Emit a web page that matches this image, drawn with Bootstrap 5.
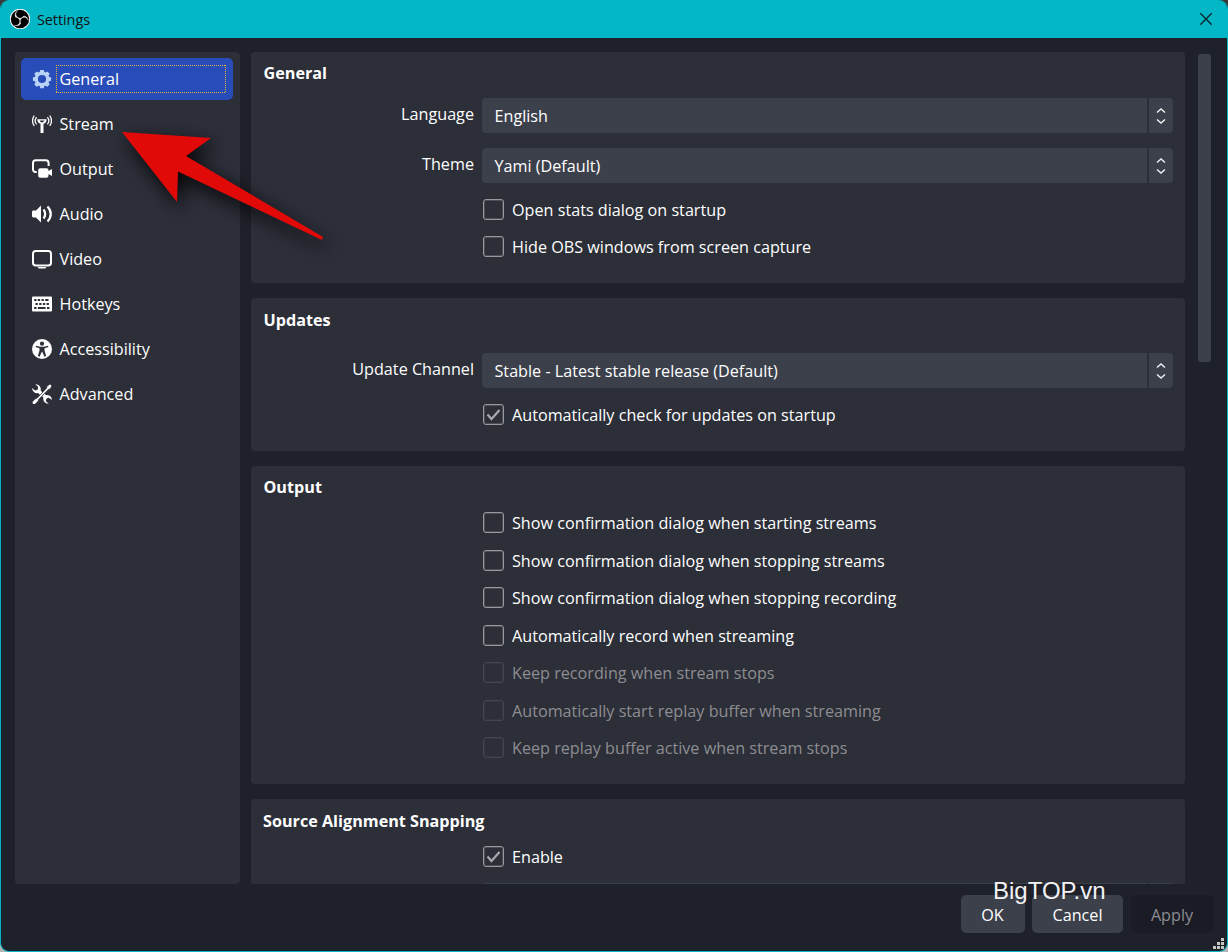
<!DOCTYPE html>
<html lang="en" data-bs-theme="dark">
<head>
<meta charset="utf-8">
<meta name="viewport" content="width=device-width, initial-scale=1">
<title>Settings</title>
<link href="https://cdn.jsdelivr.net/npm/bootstrap@5.3.0/dist/css/bootstrap.min.css" rel="stylesheet">
<style>
html, body { height: 100%; }
body { margin: 0; background: linear-gradient(#3a3a3a 50%, #b4b4b4 50%); font-family: "Open Sans", "Noto Sans", sans-serif; font-size: 16.18px; line-height: 22px; color: #fefefe; overflow: hidden; }
.win { height: 952px; background: #1f212a; border: 1px solid #03b7c7; border-width: 0 1px 1px; border-radius: 9px; overflow: hidden; }
.titlebar { height: 38px; background: #03b7c7; color: #111; font-size: 14.4px; padding: 0 14px 0 9px; flex: none; }
.titlebar .caption { margin-left: 7px; margin-top: 1px; letter-spacing: -.05px; }
.main-area { height: 846px; padding: 14px 16px 0 14px; flex: none; }
.side { width: 225px; background: #2c2e38; border-radius: 4px; padding: 6px; gap: 3px; height: 832px; flex: none; }
.side .nav-link { height: 42px; width: 212px; padding: 0 7px 0 11px; color: #fefefe; border-radius: 5px; gap: 4px; }
.side .nav-link svg { flex: none; fill: #fefefe; }
.side .nav-link span { flex: 1; height: 28px; padding: 3px 0 0 3.5px; }
.side .nav-link.active { background: #284cb8; color: #fefefe; }
.side .nav-link.active svg { fill: #b9d3f7; }
.side .nav-link.active span {
  --dot-x: repeating-linear-gradient(90deg, #e3b735 0 1px, transparent 1px 2px);
  --dot-y: repeating-linear-gradient(180deg, #e3b735 0 1px, transparent 1px 2px);
  background: var(--dot-x) top / 100% 1px no-repeat, var(--dot-x) bottom / 100% 1px no-repeat, var(--dot-y) left / 1px 100% no-repeat, var(--dot-y) right / 1px 100% no-repeat;
}
.pages { width: 934px; height: 832px; margin-left: 11px; gap: 15px; overflow: hidden; flex: none; }
.group { background: #2c2e38; border: 0; border-radius: 4px; flex: none; }
.group-title { font-size: 16.18px; font-weight: 700; line-height: 22px; margin: 0; padding: 10px 0 0 12.5px; }
.g-general { height: 231px; } .g-updates { height: 153px; } .g-output { height: 318px; } .g-snap { height: 150px; }
.g-general .fields { margin-top: 14px; }
.g-updates .group-title { padding-top: 11px; } .g-updates .fields { margin-top: 22px; }
.g-output .fields { margin-top: 6.25px; }
.g-snap .group-title { padding-top: 11px; padding-left: 12px; } .g-snap .fields { margin-top: 6px; }
.field { display: grid; grid-template-columns: 223px 692px; column-gap: 8px; height: 35px; }
.field + .field { margin-top: 15px; }
.field label { text-align: right; padding-top: 5px; }
.combo { gap: 2px; }
.combo .value { width: 665px; height: 35px; background: #3c404b; border-radius: 4px 0 0 4px; padding: 7px 12.5px 0; }
.combo .arrows { width: 24px; height: 35px; background: #3c404b; border-radius: 0 4px 4px 0; }
.field + .checks { margin-top: 8px; }
.checks + .field { margin-top: 7.25px; }
.checks { padding-left: 232px; }
.tick { height: 37.5px; gap: 8px; }
.tick i { width: 21px; height: 21px; margin-top: -1px; border: 1px solid #98999d; box-shadow: inset 0 0 0 1px rgba(152,153,157,.3); border-radius: 3px; flex: none; display: flex; }
.tick.off { color: #8c8d91; }
.tick.off i { border-color: #44464f; box-shadow: inset 0 0 0 1px rgba(68,70,79,.3); }
.bar { width: 13px; height: 308px; margin: 2px 0 0 13px; background: #3c404b; border-radius: 3px; flex: none; }
.foot { padding: 11px 13.5px 0 0; gap: 7.5px; }
.foot .btn { height: 38px; padding: 1px 0 0; border: 0; border-radius: 5px; background: #3c404b; color: #fefefe; font-size: 16.18px; line-height: 22px; }
.foot .b-ok { width: 64px; } .foot .b-cancel { width: 91px; }
.foot .b-apply { width: 83px; background: #1a1b25; color: #8c8d91; opacity: 1; }
.over { pointer-events: none; }
.arrow { left: 90px; top: 100px; filter: drop-shadow(4px 7px 9px rgba(0,0,0,.85)); }
.watermark { left: 993px; top: 878px; font: 24px/26px "Liberation Sans", Arial, sans-serif; color: #f2f2f4; }
.grip { right: 3px; bottom: 2px; }
</style>
</head>
<body>
<div class="win d-flex flex-column position-relative">
  <header class="titlebar d-flex align-items-center">
    <svg width="20" height="20" viewBox="0 0 24 24"><circle cx="12" cy="12" r="11.7" fill="#000" stroke="#f4f4f4" stroke-width="1.3"/><path fill="#f4f4f4" stroke="#f4f4f4" stroke-width=".4" d="M6.182,5.99c0.352-1.698,1.503-3.229,3.05-3.996c-0.269,0.273-0.595,0.483-0.844,0.78c-1.02,1.1-1.48,2.692-1.199,4.156c0.355,2.235,2.455,4.06,4.732,4.028c1.765,0.079,3.485-0.937,4.348-2.468c1.848,0.063,3.645,1.017,4.7,2.548c0.54,0.799,0.962,1.736,0.991,2.711c-0.342-1.295-1.202-2.446-2.375-3.095c-1.135-0.639-2.529-0.802-3.772-0.425c-1.56,0.448-2.849,1.723-3.293,3.293c-0.377,1.25-0.216,2.628,0.377,3.772c-0.825,1.429-2.315,2.449-3.932,2.756c-1.244,0.261-2.551,0.059-3.709-0.464c1.036,0.302,2.161,0.355,3.191-0.011c1.381-0.457,2.522-1.567,3.024-2.935c0.556-1.49,0.345-3.261-0.591-4.54c-0.7-1.007-1.803-1.717-3.002-1.969c-0.38-0.068-0.764-0.098-1.148-0.134c-0.611-1.231-0.834-2.66-0.528-3.996z"/></svg>
    <span class="caption">Settings</span>
    <svg class="ms-auto" width="14" height="14" viewBox="0 0 14 14"><path d="M1.3 1.3 12.7 12.7M12.7 1.3 1.3 12.7" stroke="#0b2226" stroke-width="1.3"/></svg>
  </header>

  <main class="main-area d-flex align-items-start">
    <nav class="side nav flex-column flex-nowrap">
      <a class="nav-link active d-flex align-items-center">
        <svg width="20" height="20" viewBox="0 0 20 20"><path fill-rule="evenodd" d="M8.2 1h3.6l.5 2.1 1.1.4 1.9-1.1 2.4 2.4-1.1 1.9.5 1.2 2 .4v3.5l-2 .5-.5 1.2 1.1 1.9-2.4 2.4-1.9-1.1-1.1.4-.5 2.1H8.2l-.5-2.1-1.1-.4-1.9 1.1-2.4-2.4 1.1-1.9-.5-1.2-2-.5V8.3l2-.4.5-1.2-1.1-1.9 2.4-2.4 1.9 1.1 1.1-.4zM10 5.900a4.100 4.100 0 1 0 0 8.200a4.100 4.100 0 0 0 0-8.200z"/></svg>
        <span>General</span></a>
      <a class="nav-link d-flex align-items-center">
        <svg width="20" height="20" viewBox="0 0 20 20"><path d="M5.300 5.200h9.400c0 2.400-1.300 4-3.200 4.600V19h-3V9.800C6.600 9.200 5.300 7.600 5.300 5.200zM7.500 6.600c.6 1.200 1.400 1.800 2.500 1.800s1.900-.6 2.500-1.800z" fill-rule="evenodd"/><g fill="none" stroke="#fefefe" stroke-width="1.300" stroke-linecap="round"><path d="M4.300 3.600c-1.500 2-1.500 4.300 0 6.300M15.700 3.600c1.500 2 1.500 4.300 0 6.300M2 2c-1.900 3-1.900 6.500 0 9.500M18 2c1.900 3 1.900 6.500 0 9.500"/></g></svg>
        <span>Stream</span></a>
      <a class="nav-link d-flex align-items-center">
        <svg width="20" height="20" viewBox="0 0 20 20"><path d="M4.800 12.900H3.400A2.400 2.400 0 0 1 1 10.500V4.100a2.800 2.800 0 0 1 2.800-2.800h10a2.800 2.800 0 0 1 2.800 2.800V7" fill="none" stroke="#fefefe" stroke-width="2"/><path d="M8.200 9.200h6.300a2 2 0 0 1 2 2v.9l3.500-2v7l-3.500-2v1.700a2 2 0 0 1-2 2H8.200a2 2 0 0 1-2-2v-5.600a2 2 0 0 1 2-2z"/></svg>
        <span>Output</span></a>
      <a class="nav-link d-flex align-items-center">
        <svg width="20" height="20" viewBox="0 0 20 20"><path d="M9 1.500v17L4 13.400H1.300A1.300 1.300 0 0 1 0 12.100V7.900a1.300 1.300 0 0 1 1.300-1.300H4z"/><path d="M11.500 5.500c2.200 2.500 2.200 6.500 0 9M15.500 2.500c4.300 4.500 4.300 10.500 0 15" fill="none" stroke="#fefefe" stroke-width="2.300"/></svg>
        <span>Audio</span></a>
      <a class="nav-link d-flex align-items-center">
        <svg width="20" height="20" viewBox="0 0 20 20"><rect x="1" y="2" width="18" height="14.500" rx="2.800" fill="none" stroke="#fefefe" stroke-width="2"/><path d="M5.500 18h9l-1.300 1.500H6.800z"/></svg>
        <span>Video</span></a>
      <a class="nav-link d-flex align-items-center">
        <svg width="20" height="20" viewBox="0 0 20 20"><rect y="2.500" width="20" height="15" rx="1"/><path stroke="#2c2e38" stroke-width="2" fill="none" d="M2.200 6h2.300M5.800 6h2.300M9.500 6h2.300M13.200 6h3.300M3.500 10h2.300M7.200 10h2.300M10.900 10h2.300M14.600 10h2.300M2.200 14h2.300M5.900 14h7.700M15 14h2.500"/></svg>
        <span>Hotkeys</span></a>
      <a class="nav-link d-flex align-items-center">
        <svg width="20" height="20" viewBox="0 0 20 20"><circle cx="10" cy="10" r="10"/><g fill="#2c2e38"><circle cx="10" cy="4.700" r="2.100"/><path d="M4 6.700l4 1h4l4-1 .3 1.300-3.800 1.300v2.200l1.600 5.600-1.600.6-2.300-4.900h-.4l-2.300 4.900-1.600-.6 1.600-5.600V9.300L3.700 8z"/></g></svg>
        <span>Accessibility</span></a>
      <a class="nav-link d-flex align-items-center">
        <svg width="20" height="20" viewBox="0 0 20 20"><path d="M3.300.3a5 5 0 0 1 5.300 6.300l2 2-2.500 2.500-2-2A5 5 0 0 1 .1 4l3 2.600 2.500-.9.600-2.600zM16.700 19.800a5 5 0 0 1-5.300-6.300l-1.300-1.300 2.500-2.500 1.300 1.300a5 5 0 0 1 6 5l-3-2.300-2.400.9-.7 2.500z"/><path d="M18.100 0 20 1.900l-2.200 3.300-1.500.2-10 10.500.1 1-2.900 2.900a1.600 1.600 0 0 1-2.900-.2c-.5-.9-.3-1.700.2-2.300L4 14.200l1 .1L14.700 4l.2-1.700z" stroke="#2c2e38" stroke-width=".7"/></svg>
        <span>Advanced</span></a>
    </nav>

    <section class="pages d-flex flex-column">
      <div class="card group g-general">
        <h2 class="group-title">General</h2>
        <div class="fields">
          <div class="field"><label>Language</label><div class="combo d-flex"><div class="value">English</div><div class="arrows"><svg width="24" height="35" viewBox="0 0 24 35"><path d="M8 14.500l4-3.500 4 3.500M8 21.500l4 3.500 4-3.500" fill="none" stroke="#f0f0f0" stroke-width="1.400"/></svg></div></div></div>
          <div class="field"><label>Theme</label><div class="combo d-flex"><div class="value">Yami (Default)</div><div class="arrows"><svg width="24" height="35" viewBox="0 0 24 35"><path d="M8 14.500l4-3.500 4 3.500M8 21.500l4 3.500 4-3.500" fill="none" stroke="#f0f0f0" stroke-width="1.400"/></svg></div></div></div>
          <div class="checks">
            <div class="tick d-flex align-items-center"><i></i><span>Open stats dialog on startup</span></div>
            <div class="tick d-flex align-items-center"><i></i><span>Hide OBS windows from screen capture</span></div>
          </div>
        </div>
      </div>
      <div class="card group g-updates">
        <h2 class="group-title">Updates</h2>
        <div class="fields">
          <div class="field"><label>Update Channel</label><div class="combo d-flex"><div class="value">Stable - Latest stable release (Default)</div><div class="arrows"><svg width="24" height="35" viewBox="0 0 24 35"><path d="M8 14.500l4-3.500 4 3.500M8 21.500l4 3.500 4-3.500" fill="none" stroke="#f0f0f0" stroke-width="1.400"/></svg></div></div></div>
          <div class="checks">
            <div class="tick d-flex align-items-center"><i><svg width="19" height="19" viewBox="0 0 19 19"><path d="M3.500 9.500l4 4.500 8-9" fill="none" stroke="#a8a8ac" stroke-width="2.200"/></svg></i><span>Automatically check for updates on startup</span></div>
          </div>
        </div>
      </div>
      <div class="card group g-output">
        <h2 class="group-title">Output</h2>
        <div class="fields">
          <div class="checks">
            <div class="tick d-flex align-items-center"><i></i><span>Show confirmation dialog when starting streams</span></div>
            <div class="tick d-flex align-items-center"><i></i><span>Show confirmation dialog when stopping streams</span></div>
            <div class="tick d-flex align-items-center"><i></i><span>Show confirmation dialog when stopping recording</span></div>
            <div class="tick d-flex align-items-center"><i></i><span>Automatically record when streaming</span></div>
            <div class="tick off d-flex align-items-center"><i></i><span>Keep recording when stream stops</span></div>
            <div class="tick off d-flex align-items-center"><i></i><span>Automatically start replay buffer when streaming</span></div>
            <div class="tick off d-flex align-items-center"><i></i><span>Keep replay buffer active when stream stops</span></div>
          </div>
        </div>
      </div>
      <div class="card group g-snap">
        <h2 class="group-title">Source Alignment Snapping</h2>
        <div class="fields">
          <div class="checks">
            <div class="tick d-flex align-items-center"><i><svg width="19" height="19" viewBox="0 0 19 19"><path d="M3.500 9.500l4 4.500 8-9" fill="none" stroke="#a8a8ac" stroke-width="2.200"/></svg></i><span>Enable</span></div>
          </div>
          <div class="field"><label></label><div class="combo d-flex"><div class="value"></div><div class="arrows"></div></div></div>
        </div>
      </div>
    </section>
    <div class="bar"></div>
  </main>

  <footer class="foot d-flex justify-content-end">
    <button class="btn b-ok">OK</button>
    <button class="btn b-cancel">Cancel</button>
    <button class="btn b-apply" disabled>Apply</button>
  </footer>

  <svg class="grip over position-absolute" width="11" height="11" viewBox="0 0 11 11" fill="#c6c6c2"><path d="M8 0h3v3H8zM8 4h3v3H8zM4 4h3v3H4zM8 8h3v3H8zM4 8h3v3H4zM0 8h3v3H0z"/></svg>
</div>
<svg class="arrow over position-absolute" width="260" height="170" viewBox="90 100 260 170"><path fill="#e10a08" d="M122 132 211 138 186 156 323 237 322 240 178 171.500 177 202z"/></svg>
<div class="watermark over position-absolute">BigTOP.vn</div>
<script src="https://cdn.jsdelivr.net/npm/bootstrap@5.3.0/dist/js/bootstrap.bundle.min.js"></script>
</body>
</html>
